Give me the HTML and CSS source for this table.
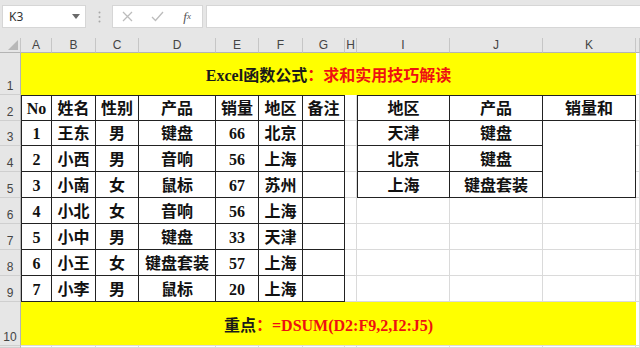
FILE: index.html
```html
<!DOCTYPE html>
<html lang="zh">
<head>
<meta charset="utf-8">
<title>Excel DSUM</title>
<link rel="stylesheet" href="styles.css">
</head>
<body>
<div class="toolbar">
  <div class="namebox"><span>K3</span><svg width="8" height="5" viewBox="0 0 8 5"><path d="M0 0H8L4 5Z" fill="#6a6a6a"/></svg></div>
  <div class="grip"><svg width="3" height="12" viewBox="0 0 3 12"><circle cx="1.5" cy="1.5" r="1" fill="#a8a8a8"/><circle cx="1.5" cy="6" r="1" fill="#a8a8a8"/><circle cx="1.5" cy="10.5" r="1" fill="#a8a8a8"/></svg></div>
  <div class="fxbox">
    <span class="slot"><svg width="11" height="11" viewBox="0 0 11 11"><path d="M1 1L10 10M10 1L1 10" stroke="#bcbcbc" stroke-width="1.3" fill="none"/></svg></span>
    <span class="slot"><svg width="13" height="11" viewBox="0 0 13 11"><path d="M1 6L4.5 9.5L12 1" stroke="#bcbcbc" stroke-width="1.3" fill="none"/></svg></span>
    <span class="slot fx">f<sub>x</sub></span>
  </div>
  <div class="formula"></div>
</div>
<div class="sheet">
  <div class="corner"><svg width="10" height="10" viewBox="0 0 10 10"><path d="M10 0V10H0Z" fill="#b8b8b8"/></svg></div>
  <div class="ch">A</div><div class="ch">B</div><div class="ch">C</div><div class="ch">D</div><div class="ch">E</div><div class="ch">F</div><div class="ch">G</div><div class="ch">H</div><div class="ch">I</div><div class="ch">J</div><div class="ch">K</div><div class="ch"></div>

  <div class="rh">1</div>
  <div class="band"><span class="dark">Excel函数公式</span><span class="red">：求和实用技巧解读</span></div>
  <div class="c"></div>

  <div class="rh">2</div>
  <div class="t first top">No</div><div class="t top">姓名</div><div class="t top">性别</div><div class="t top">产品</div><div class="t top">销量</div><div class="t top">地区</div><div class="t top">备注</div>
  <div class="c"></div>
  <div class="t first top">地区</div><div class="t top">产品</div><div class="t top">销量和</div>
  <div class="c"></div>

  <div class="rh">3</div>
  <div class="t first">1</div><div class="t">王东</div><div class="t">男</div><div class="t">键盘</div><div class="t">66</div><div class="t">北京</div><div class="t"></div>
  <div class="c"></div>
  <div class="t first">天津</div><div class="t">键盘</div><div class="t merged"></div>
  <div class="c"></div>

  <div class="rh">4</div>
  <div class="t first">2</div><div class="t">小西</div><div class="t">男</div><div class="t">音响</div><div class="t">56</div><div class="t">上海</div><div class="t"></div>
  <div class="c"></div>
  <div class="t first">北京</div><div class="t">键盘</div>
  <div class="c"></div>

  <div class="rh">5</div>
  <div class="t first">3</div><div class="t">小南</div><div class="t">女</div><div class="t">鼠标</div><div class="t">67</div><div class="t">苏州</div><div class="t"></div>
  <div class="c"></div>
  <div class="t first">上海</div><div class="t">键盘套装</div>
  <div class="c"></div>

  <div class="rh">6</div>
  <div class="t first">4</div><div class="t">小北</div><div class="t">女</div><div class="t">音响</div><div class="t">56</div><div class="t">上海</div><div class="t"></div>
  <div class="c"></div><div class="c"></div><div class="c"></div><div class="c"></div><div class="c"></div>

  <div class="rh">7</div>
  <div class="t first">5</div><div class="t">小中</div><div class="t">男</div><div class="t">键盘</div><div class="t">33</div><div class="t">天津</div><div class="t"></div>
  <div class="c"></div><div class="c"></div><div class="c"></div><div class="c"></div><div class="c"></div>

  <div class="rh">8</div>
  <div class="t first">6</div><div class="t">小王</div><div class="t">女</div><div class="t">键盘套装</div><div class="t">57</div><div class="t">上海</div><div class="t"></div>
  <div class="c"></div><div class="c"></div><div class="c"></div><div class="c"></div><div class="c"></div>

  <div class="rh">9</div>
  <div class="t first">7</div><div class="t">小李</div><div class="t">男</div><div class="t">鼠标</div><div class="t">20</div><div class="t">上海</div><div class="t"></div>
  <div class="c"></div><div class="c"></div><div class="c"></div><div class="c"></div><div class="c"></div>

  <div class="rh">10</div>
  <div class="band bottom"><span class="dark">重点</span><span class="red">：=DSUM(D2:F9,2,I2:J5)</span></div>
  <div class="c"></div>

  <div class="rh"></div>
  <div class="c"></div><div class="c"></div><div class="c"></div><div class="c"></div><div class="c"></div><div class="c"></div><div class="c"></div><div class="c"></div><div class="c"></div><div class="c"></div><div class="c"></div><div class="c"></div>
</div>
</body>
</html>
```

FILE: styles.css
```css
html, body {
  margin: 0;
  padding: 0;
  background: #ffffff;
  width: 640px;
  height: 348px;
  overflow: hidden;
}

.toolbar {
  height: 38px;
  box-sizing: border-box;
  background: #e6e6e6;
  display: flex;
  align-items: flex-start;
  padding-top: 5px;
}

.namebox {
  margin-left: 2px;
  width: 84px;
  height: 23px;
  box-sizing: border-box;
  background: #ffffff;
  border: 1px solid #d6d6d6;
  display: flex;
  align-items: center;
  justify-content: space-between;
  padding: 0 5px 0 6px;
  font: 12px "Noto Sans", "Liberation Sans", sans-serif;
  color: #333333;
}

.grip {
  width: 26px;
  height: 23px;
  display: flex;
  align-items: center;
  justify-content: center;
}

.fxbox {
  width: 91px;
  height: 23px;
  box-sizing: border-box;
  background: #ffffff;
  border: 1px solid #d6d6d6;
  display: flex;
  align-items: center;
}

.slot {
  width: 31px;
  display: flex;
  align-items: center;
  justify-content: center;
}

.fx {
  font: italic 13px "Liberation Serif", serif;
  color: #555555;
  line-height: 1;
}

.fx sub {
  font-size: 9px;
  vertical-align: -1px;
}

.formula {
  margin-left: 3px;
  flex: 1;
  height: 23px;
  background: #ffffff;
  border-left: 1px solid #d6d6d6;
  border-top: 1px solid #d6d6d6;
  border-bottom: 1px solid #d6d6d6;
  box-sizing: border-box;
}

.sheet {
  display: grid;
  grid-template-columns: 21px 31px 44px 43px 77px 43px 44px 42px 12px 93px 93px 93px 1fr;
  grid-template-rows: 15px 42px 26px 25px 26px 26px 26px 26px 26px 26px 44px 1fr;
  height: 310px;
  font: bold 16px "Liberation Serif", "Noto Sans CJK SC", serif;
  color: #111111;
}

.sheet > div {
  box-sizing: border-box;
  min-width: 0;
}

.corner {
  background: #e6e6e6;
  border-right: 1px solid #c6c6c6;
  border-bottom: 1px solid #b4b4b4;
  display: flex;
  align-items: flex-end;
  justify-content: flex-end;
  padding: 0 2px 2px 0;
}

.ch {
  background: #e6e6e6;
  border-right: 1px solid #c6c6c6;
  border-bottom: 1px solid #b4b4b4;
  font: 12px "Liberation Sans", "Noto Sans", sans-serif;
  color: #444444;
  display: flex;
  align-items: center;
  justify-content: center;
  line-height: 14px;
}

.rh {
  background: #e6e6e6;
  border-right: 1px solid #b4b4b4;
  border-bottom: 1px solid #cfcfcf;
  font: 12px "Liberation Sans", "Noto Sans", sans-serif;
  color: #444444;
  display: flex;
  align-items: flex-end;
  justify-content: center;
  line-height: 14px;
  padding-bottom: 1px;
}

.c {
  border-right: 1px solid #dadada;
  border-bottom: 1px solid #dadada;
}

.t {
  border-right: 1px solid #222222;
  border-bottom: 1px solid #222222;
  display: flex;
  align-items: center;
  justify-content: center;
  white-space: nowrap;
  line-height: 20px;
  padding-top: 2px;
}

.t.first {
  border-left: 1px solid #222222;
}

.t.top {
  border-top: 1px solid #222222;
  padding-top: 1px;
}

.t.merged {
  grid-row: span 3;
}

.band {
  grid-column: span 11;
  background: #ffff00;
  display: flex;
  align-items: center;
  justify-content: center;
  white-space: nowrap;
}

.band.bottom {
  border-bottom: 1px solid #dadada;
}

.dark {
  color: #1a1a1a;
}

.red {
  color: #ee1111;
}
```
